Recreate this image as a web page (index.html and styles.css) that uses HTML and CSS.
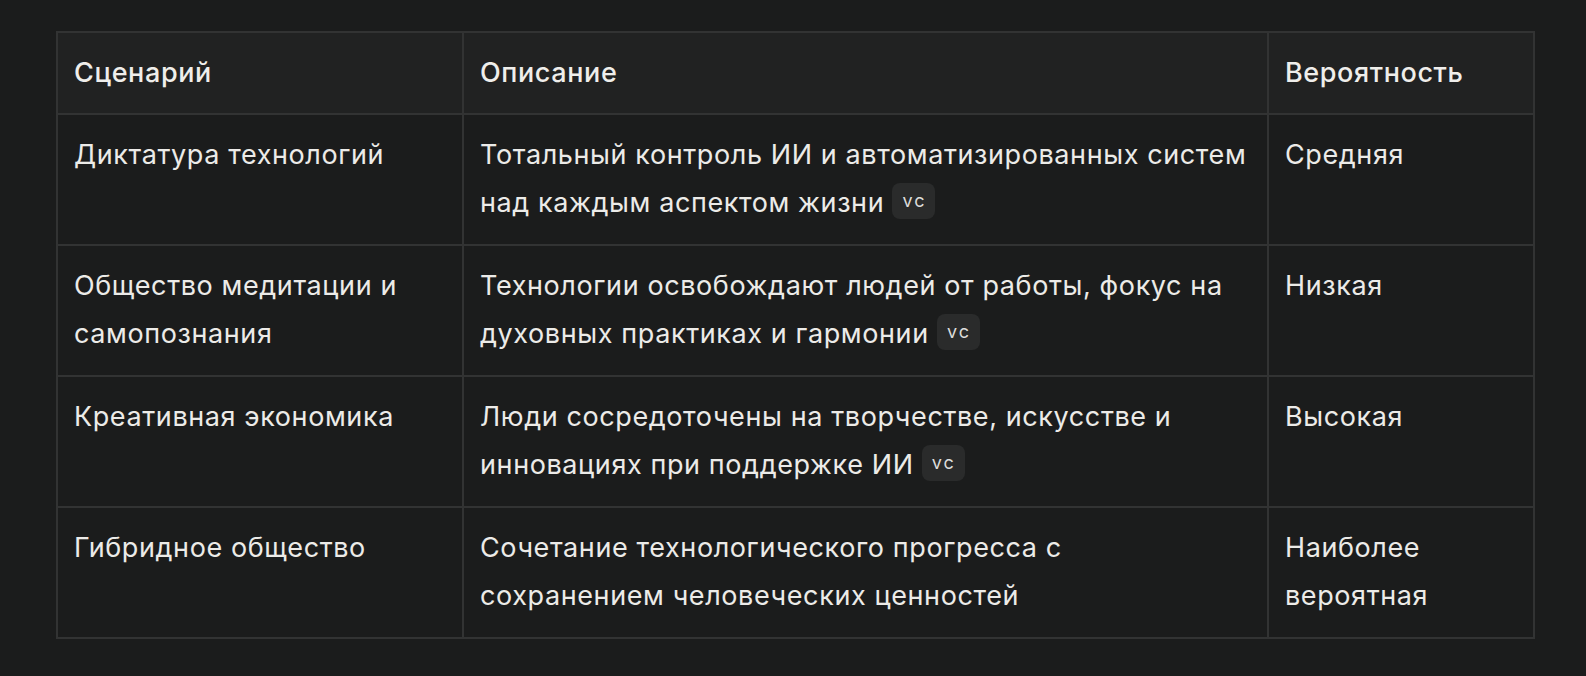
FILE: index.html
```html
<!DOCTYPE html>
<html lang="ru">
<head>
<meta charset="utf-8">
<link rel="stylesheet" href="styles.css">
</head>
<body>
<div class="page">
  <table class="grid">
    <colgroup>
      <col class="c1">
      <col class="c2">
      <col class="c3">
    </colgroup>
    <thead>
      <tr>
        <th>Сценарий</th>
        <th>Описание</th>
        <th>Вероятность</th>
      </tr>
    </thead>
    <tbody>
      <tr>
        <td>Диктатура технологий</td>
        <td>Тотальный контроль ИИ и автоматизированных систем над каждым аспектом жизни <span class="src">vc</span></td>
        <td>Средняя</td>
      </tr>
      <tr>
        <td>Общество медитации и самопознания</td>
        <td>Технологии освобождают людей от работы, фокус на духовных практиках и гармонии <span class="src">vc</span></td>
        <td>Низкая</td>
      </tr>
      <tr>
        <td>Креативная экономика</td>
        <td>Люди сосредоточены на творчестве, искусстве и инновациях при поддержке ИИ <span class="src">vc</span></td>
        <td>Высокая</td>
      </tr>
      <tr>
        <td>Гибридное общество</td>
        <td>Сочетание технологического прогресса с сохранением человеческих ценностей</td>
        <td>Наиболее вероятная</td>
      </tr>
    </tbody>
  </table>
</div>
</body>
</html>
```

FILE: styles.css
```css
html, body {
  margin: 0;
  padding: 0;
  background: #1b1c1c;
}

.page {
  padding: 31px 0 0 56px;
  font-family: Inter, "Noto Sans", sans-serif;
  color: #ecebe8;
}

.grid {
  width: 1479px;
  table-layout: fixed;
  border-collapse: separate;
  border-spacing: 0;
  border-top: 2px solid #323333;
  border-left: 2px solid #323333;
}

.c1 { width: 406px; }
.c2 { width: 805px; }
.c3 { width: 266px; }

.grid th,
.grid td {
  border-right: 2px solid #323333;
  border-bottom: 2px solid #323333;
  padding: 16px 14px 16px 16px;
  font-size: 27px;
  line-height: 48px;
  letter-spacing: 0.6px;
  text-align: left;
  vertical-align: top;
}

.grid th {
  background: #212222;
  font-weight: 500;
  color: #efeeeb;
}

.grid td {
  font-weight: 400;
  padding-bottom: 17px;
}

.src {
  display: inline-block;
  height: 36px;
  line-height: 36px;
  padding: 0 9px 0 10px;
  margin-left: 0;
  border-radius: 8px;
  background: #2a2b2b;
  color: #dcdcda;
  font-size: 18px;
  letter-spacing: 2px;
  vertical-align: 5px;
}
```
